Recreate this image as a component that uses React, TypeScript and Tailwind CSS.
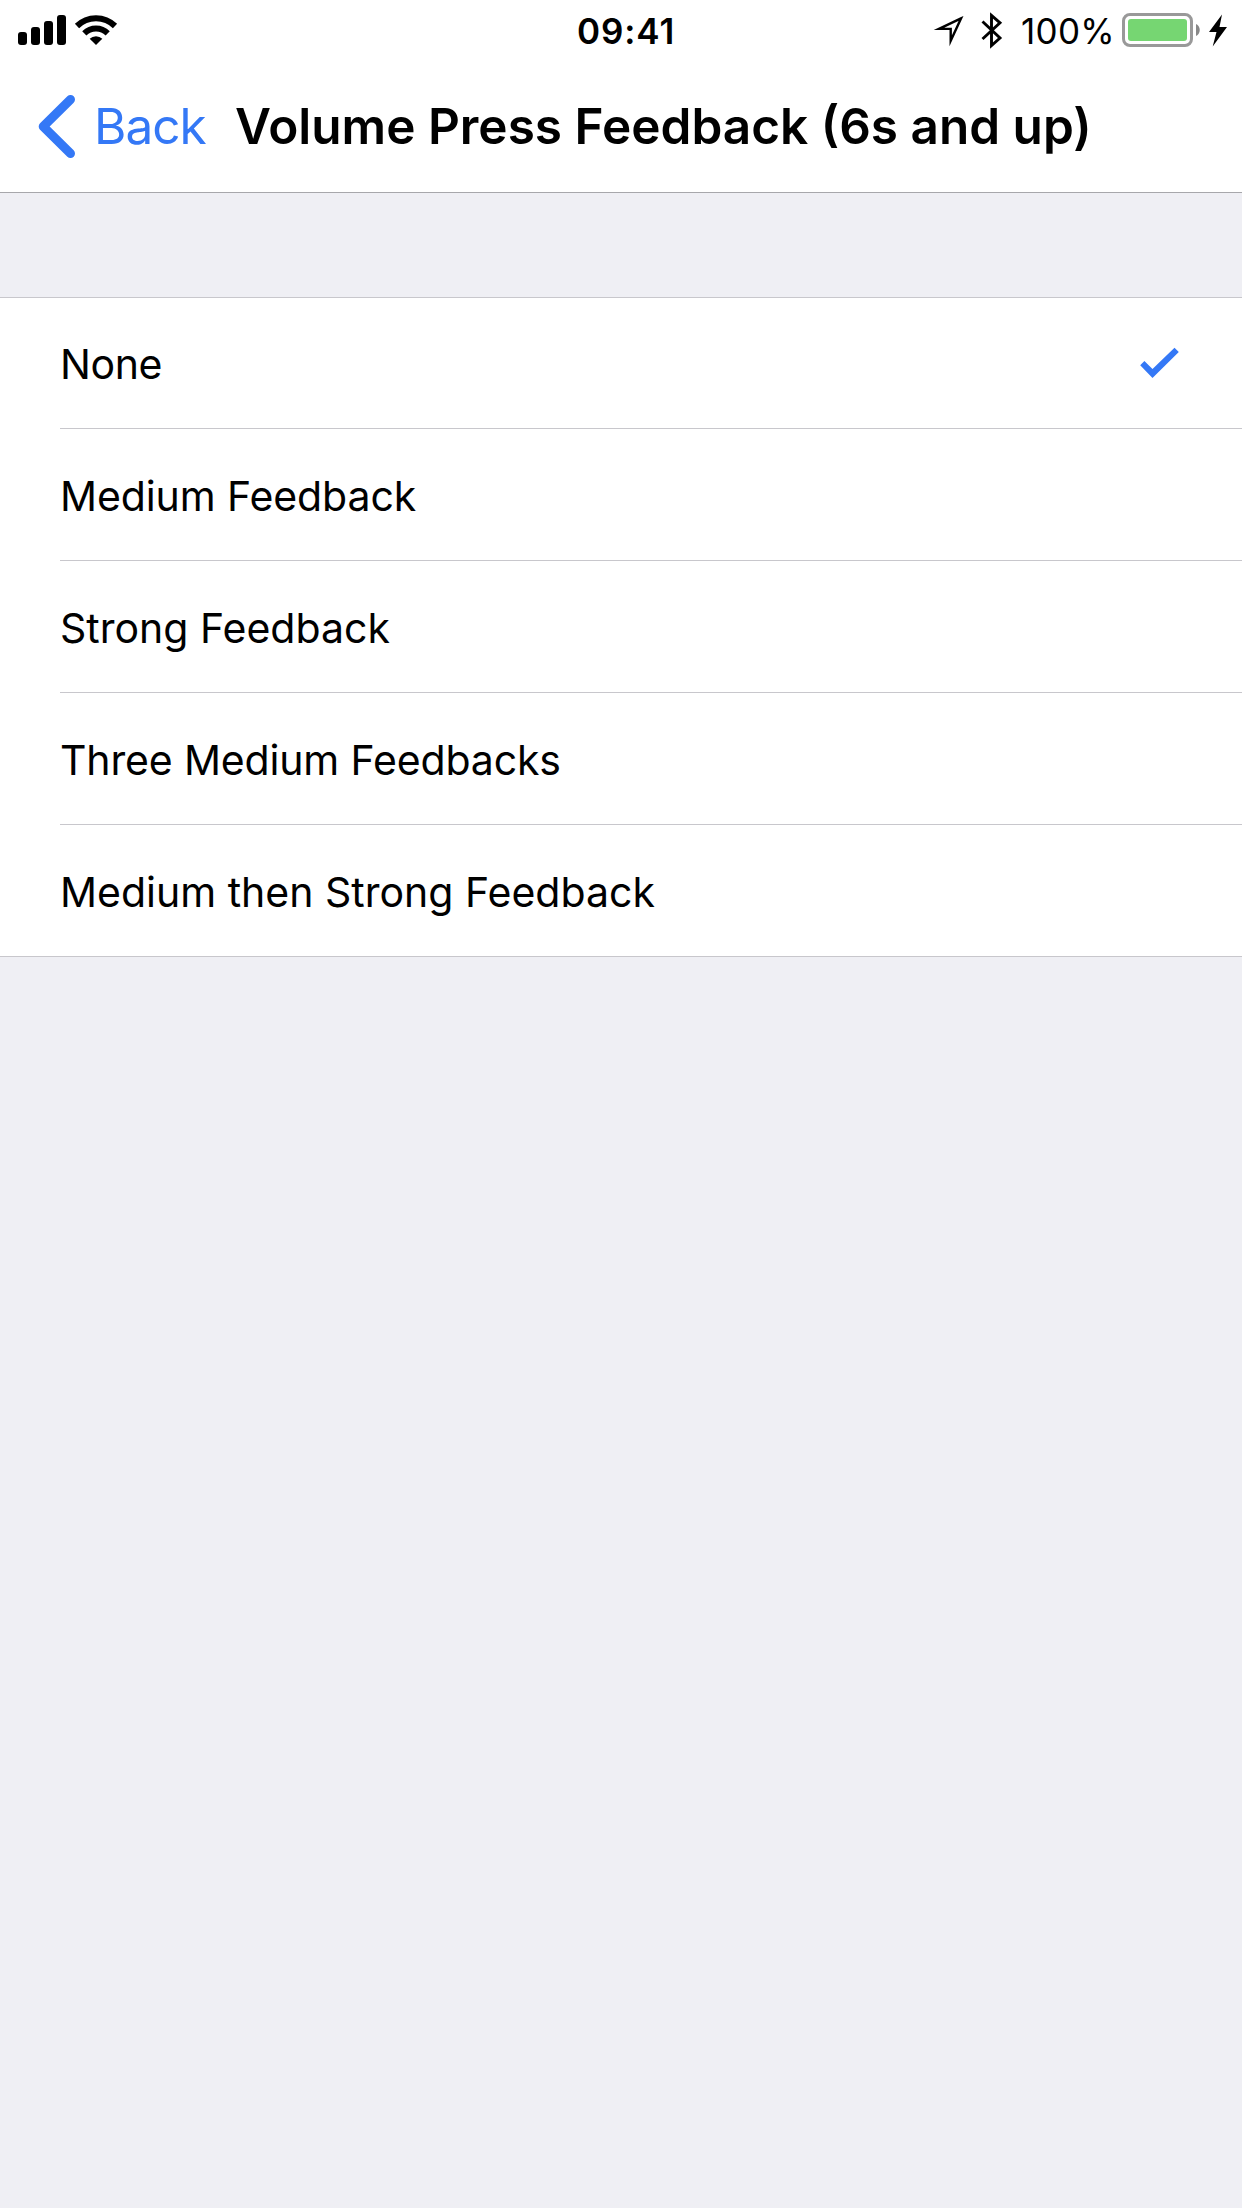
const options = [
  { label: 'None', tracking: 'tracking-[-0.4px]', selected: true },
  { label: 'Medium Feedback', tracking: 'tracking-[-0.1px]' },
  { label: 'Strong Feedback', tracking: 'tracking-[0px]' },
  { label: 'Three Medium Feedbacks', tracking: 'tracking-[-0.15px]' },
  { label: 'Medium then Strong Feedback', tracking: 'tracking-[0px]' },
];

function StatusBar() {
  return (
    <div className="flex h-[60px] items-start">
      <svg className="ml-4 h-[60px] w-[54px]" viewBox="16 0 54 60">
        <rect x="18" y="32" width="9" height="13" rx="3" />
        <rect x="31" y="27" width="9" height="18" rx="3" />
        <rect x="44" y="21" width="9" height="24" rx="3" />
        <rect x="57" y="15" width="9" height="30" rx="3" />
      </svg>
      <svg className="h-[60px] w-[50px]" viewBox="70 0 50 60">
        <path d="M77 26a27 27 0 0 1 38 0M84.3 33.3a16.8 16.8 0 0 1 23.4 0" fill="none" stroke="#000" strokeWidth="6" />
        <path d="M96 45l-6.3-6.3a9 9 0 0 1 12.6 0z" />
      </svg>
      <span className="ml-[457px] w-[110px] pt-[10px] text-[35px] leading-[43px] font-semibold tracking-[0.9px]">09:41</span>
      <svg className="ml-[243px] h-[60px] w-[40px]" viewBox="930 0 40 60">
        <path d="M961 18.4L939 28.9H950.7V40.8Z" fill="none" stroke="#000" strokeWidth="2.4" strokeMiterlimit="10" />
      </svg>
      <svg className="h-[60px] w-[48px]" viewBox="970 0 48 60">
        <path d="M982.5 21.5L1000 38L991.5 45.5V15.4L1000 22.8L982.5 39" fill="none" stroke="#000" strokeWidth="2.9" />
      </svg>
      <span className="ml-[3px] w-[99px] pt-[10px] text-[35px] leading-[43px] tracking-[0.3px] whitespace-nowrap">100%</span>
      <svg className="h-[60px] w-[122px]" viewBox="1120 0 122 60">
        <rect x="1123.5" y="14.5" width="68" height="31" rx="6.5" fill="none" stroke="#999" strokeWidth="3" />
        <rect x="1128" y="19" width="59" height="22" rx="3" fill="#76d672" />
        <path d="M1196 24c5 2 5 10 0 12z" fill="#888" />
        <path d="M1222 14.5L1209 32h7.5l-3.8 14.5L1227 27h-7.5z" />
      </svg>
    </div>
  );
}

export default function App() {
  return (
    <div className="flex h-[2208px] w-[1242px] flex-col overflow-hidden bg-[#efeff4] font-['Inter',sans-serif] text-black">
      <header className="h-[193px] border-b border-[#a7a7ab] bg-white">
        <StatusBar />
        <div className="flex items-center pt-[30px] text-[49.5px] leading-[72px]">
          <button className="flex items-center text-[#3478f6]">
            <svg className="ml-[34px] h-[72px] w-[60px]" viewBox="34 90 60 72">
              <path d="M70.5 99.5L43.2 126.5L70.5 153.5" fill="none" stroke="currentColor" strokeWidth="9" strokeLinecap="round" strokeLinejoin="round" />
            </svg>
            <span className="w-[141px] text-left tracking-[-1px]">Back</span>
          </button>
          <h1 className="font-semibold whitespace-nowrap">Volume Press Feedback (6s and up)</h1>
        </div>
      </header>
      <ul className="mt-[104px] border-y border-[#c8c7cc] bg-white pl-[60px]">
        {options.map((o) => (
          <li key={o.label} className="flex h-[132px] items-center justify-between border-b border-[#c8c7cc] pt-[4px] text-[41px] first:h-[131px] last:h-[131px] last:border-b-0">
            <span className={o.tracking}>{o.label}</span>
            {o.selected && (
              <svg className="mr-[60px] mb-[2px] h-[34px] w-[44px]" viewBox="1138 347 44 34" fill="#3478f6">
                <path d="M1140.2 365.2l4.2-4.1 8.1 8 22-21.3 4.3 4.3-26.3 25.9z" />
              </svg>
            )}
          </li>
        ))}
      </ul>
    </div>
  );
}
